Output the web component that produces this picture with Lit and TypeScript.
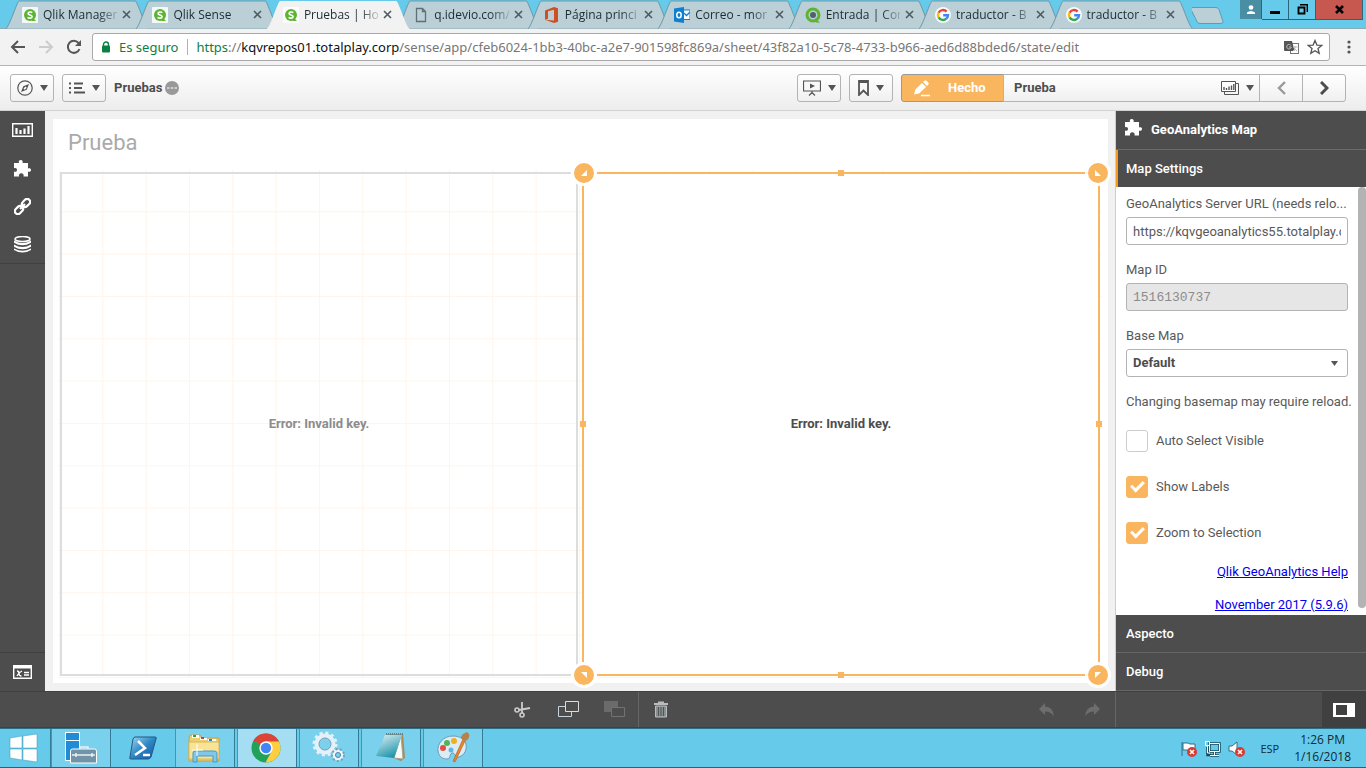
import { LitElement, html, svg, css } from "lit";
import { customElement } from "lit/decorators.js";
import { classMap } from "lit/directives/class-map.js";

const qlik = svg`
  <rect x="0" y="0" width="16" height="16" rx="1" fill="#fff" opacity=".85"/>
  <circle cx="8" cy="8" r="6" fill="#5cb531"/><path d="M9 9l5 5h-4z" fill="#5cb531"/>
  <path d="M10.3 5.6C9 4.6 6 4.8 6.1 6.6c.1 1.700 4 1.200 4 3-.1 1.900-3.100 1.900-4.500.7" fill="none" stroke="#fff" stroke-width="1.600"/>`;
const google = svg`
  <circle cx="8" cy="8" r="8" fill="#fff" opacity=".9"/>
  <g fill="none" stroke-width="2.400">
    <path d="M11.600 4.600A5 5 0 0 0 3.600 5.700" stroke="#ea4335"/>
    <path d="M3.600 5.700a5 5 0 0 0 0 4.800" stroke="#fbbc05"/>
    <path d="M3.600 10.400a5 5 0 0 0 7.700 1.300" stroke="#34a853"/>
    <path d="M11.300 11.700A5 5 0 0 0 13 8.200H8.200" stroke="#4285f4"/>
  </g>`;
const glyphs: Record<string, unknown> = {
  qlik,
  google,
  page: svg`<path d="M3.500 1.500h6l3 3v10h-9zM9.500 1.500v3h3" fill="none" stroke="#5f7177" stroke-width="1.300"/>`,
  office: svg`<path d="M1 3.500L10 0l4 1.200v13.600L10 16l-9-3.200 9 .8V2.800L4 4.200v7.600l-3 1z" fill="#cf4f25"/>`,
  outlook: svg`<path d="M9 3h7v9.500H9z" fill="#fff" stroke="#0f7fd0"/><path d="M10 6l2.500 2.500L16 5" fill="none" stroke="#0f7fd0" stroke-width="1.300"/>
    <path d="M0 1.500L10 0v16L0 14.500z" fill="#0f7fd0"/><ellipse cx="5" cy="8" rx="2.200" ry="2.800" fill="none" stroke="#fff" stroke-width="1.500"/>`,
  ring: svg`<circle cx="8" cy="8" r="6" fill="#bcd" stroke="#5cb531" stroke-width="3"/><path d="M10 11l5 4.500h-4z" fill="#5cb531"/><circle cx="8" cy="8" r="3" fill="#50616a"/>`,
};

const tabs = [
  { icon: "qlik", title: "Qlik Manager" },
  { icon: "qlik", title: "Qlik Sense" },
  { icon: "qlik", title: "Pruebas | Hoj", active: true },
  { icon: "page", title: "q.idevio.com/" },
  { icon: "office", title: "Página princi" },
  { icon: "outlook", title: "Correo - mor" },
  { icon: "ring", title: "Entrada | Cor" },
  { icon: "google", title: "traductor - B" },
  { icon: "google", title: "traductor - B" },
];

@customElement("browser-chrome")
export class BrowserChrome extends LitElement {
  static styles = css`
    :host { display: block; font-family: "Noto Sans", "Open Sans", sans-serif; color: #222; }
    .strip { display: flex; height: 29px; background: #66caea; box-sizing: border-box; }
    .tabs { flex: 1; min-width: 0; display: flex; padding-left: 18px; border-bottom: 1px solid #8eabb5; height: 28px; }
    .tab { position: relative; flex: 1 1 0; min-width: 0; display: flex; align-items: center; gap: 5px; height: 29px; margin-left: -12px; padding: 0 17px 0 16px; box-sizing: border-box; border: 0; background: none; font: 12px/16px "Open Sans", sans-serif; text-align: left; color: #1d2c33; }
    .tab svg { position: relative; flex: none; }
    .tab .shape { position: absolute; left: 0; top: 0; width: 100%; height: 29px; overflow: visible; }
    .tab.active { z-index: 1; }
    .title { position: relative; flex: 1; min-width: 0; white-space: nowrap; -webkit-mask-image: linear-gradient(90deg, #000 75%, rgba(0, 0, 0, 0.2)); }
    .side { width: 174px; display: flex; justify-content: space-between; align-items: flex-start; border-bottom: 1px solid #8eabb5; height: 28px; }
    .win { display: flex; margin-right: 3px; }
    .win button { border: 1px solid #2c6479; border-top: 0; border-left: 0; height: 20px; padding: 0; background: #66caea; display: flex; align-items: center; justify-content: center; width: 27px; }
    .win .user { background: #4a8ea4; width: 22px; height: 19px; border-bottom: 0; }
    .win .close { background: #c75850; width: 47px; }
    .nav { display: flex; align-items: center; height: 37px; box-sizing: border-box; background: #f2f2f2; border-bottom: 1px solid #b4b4b4; padding: 0 8px 0 8px; gap: 8px; }
    .nav .ic { border: 0; background: none; padding: 0; width: 20px; height: 20px; flex: none; }
    .box { flex: 1; min-width: 0; display: flex; align-items: center; height: 28px; box-sizing: border-box; border: 1px solid #a9a9a9; border-radius: 3px; background: #fff; padding: 0 6px 0 8px; gap: 8px; }
    .safe { color: #0b8043; font-size: 13px; border-right: 1px solid #b0b0b0; padding-right: 9px; line-height: 16px; white-space: nowrap; }
    .url { flex: 1; color: #777; font-size: 13px; line-height: 18px; white-space: nowrap; overflow: hidden; }
    .url b { font-weight: 400; color: #0b8043; }
    .url i { font-style: normal; color: #111; }
  `;

  render() {
    return html`
      <div class="strip">
        <div class="tabs">
          ${tabs.map(
            (t) => html`<button class=${classMap({ tab: true, active: !!t.active })}>
              <svg class="shape" viewBox="0 0 142 29" preserveAspectRatio="none">
                <path d="M0 28.500C3 28 11 1 13 1H129C131 1 139 28 142 28.500${t.active ? "V29H0Z" : ""}" fill=${t.active ? "#f2f2f2" : "#bacfd6"} stroke=${t.active ? "none" : "#6f99a8"}/>
              </svg>
              <svg width="16" height="16" viewBox="0 0 16 16">${glyphs[t.icon]}</svg>
              <span class="title">${t.title}</span>
              <svg width="9" height="9" viewBox="0 0 9 9"><path d="M1 1l7 7M8 1L1 8" stroke="#4f5b60" stroke-width="1.600"/></svg>
            </button>`
          )}
        </div>
        <div class="side">
          <svg width="36" height="26"><path d="M2 7.500h24q2 0 3 2l4 12q0 2-2 2H10q-2 0-3-2L1 9.500q0-2 1-2z" fill="#bacfd6" stroke="#5c9db2" transform="translate(-2 0)"/></svg>
          <div class="win">
            <button class="user" aria-label="Usuario"><svg width="10" height="10"><circle cx="5" cy="2.500" r="2.300" fill="#fff"/><path d="M1 9V7.500Q5 4.500 9 7.500V9z" fill="#fff"/></svg></button>
            <button aria-label="Minimizar"><svg width="10" height="10"><rect y="6" width="10" height="3"/></svg></button>
            <button aria-label="Restaurar"><svg width="11" height="11"><path d="M3 .5h7.500V8M1.500 3.500h6v6h-6z" fill="none" stroke="#000" stroke-width="1.800"/></svg></button>
            <button class="close" aria-label="Cerrar"><svg width="9" height="9"><path d="M1 1l7 7M8 1L1 8" stroke="#000" stroke-width="2.600"/></svg></button>
          </div>
        </div>
      </div>
      <div class="nav">
        <button class="ic" aria-label="Atrás"><svg width="20" height="20"><path d="M17 10H4M10 4l-6 6 6 6" fill="none" stroke="#555" stroke-width="2"/></svg></button>
        <button class="ic" aria-label="Adelante"><svg width="20" height="20"><path d="M3 10h13M10 4l6 6-6 6" fill="none" stroke="#ccc" stroke-width="2"/></svg></button>
        <button class="ic" aria-label="Recargar"><svg width="20" height="20"><path d="M15.500 12A6 6 0 1 1 14.500 6" fill="none" stroke="#555" stroke-width="2"/><path d="M17 3v6h-6z" fill="#555"/></svg></button>
        <div class="box">
          <svg width="10" height="12"><path d="M2.500 5V3.500a2.500 2.500 0 0 1 5 0V5" fill="none" stroke="#0b8043" stroke-width="1.400"/><rect x="1" y="4.500" width="8" height="7" rx="1" fill="#0b8043"/></svg>
          <span class="safe">Es seguro</span>
          <span class="url"><b>https</b>://<i>kqvrepos01.totalplay.corp</i>/sense/app/cfeb6024-1bb3-40bc-a2e7-901598fc869a/sheet/43f82a10-5c78-4733-b966-aed6d88bded6/state/edit</span>
          <svg width="15" height="15"><rect x="6.500" y="3.500" width="8" height="10" fill="#fff" stroke="#777"/><path d="M0 1h8l2.500 10H1q-1 0-1-1z" fill="#555"/><path d="M7 5.500A2.300 2.300 0 1 0 7.300 7H5M9 7h4.500M11 6v1q0 3-2 4M10 8l3 3" fill="none" stroke="#bbb" stroke-width="1"/></svg>
          <svg width="16" height="16"><path d="M8 1.500l1.900 4.600 4.800.3-3.700 3.100 1.200 4.800L8 11.700l-4.200 2.600L5 9.500 1.300 6.400l4.800-.3z" fill="none" stroke="#555" stroke-width="1.300"/></svg>
        </div>
        <button class="ic" aria-label="Menú"><svg width="20" height="20"><circle cx="11" cy="5" r="1.600" fill="#555"/><circle cx="11" cy="10" r="1.600" fill="#555"/><circle cx="11" cy="15" r="1.600" fill="#555"/></svg></button>
      </div>`;
  }
}

const caret = html`<svg width="8" height="6"><path d="M0 0h8L4 6z" fill="#555"/></svg>`;
const puzzle = (s: number) => html`<svg width=${s} height=${s} viewBox="0 0 17 17"><path d="M0 3h5C4.300 1.500 5 0 6.700 0s2.500 1.500 1.800 3H14v5.500c1.500-.8 3-.2 3 1.500s-1.500 2.300-3 1.500V16.500H9.500c.7-2-.5-3.300-2.200-3.300s-2.900 1.300-2.200 3.300H0v-5c2 .6 3-.3 3-1.600S2 7.600 0 8.200z" fill="#fff"/></svg>`;

@customElement("sense-toolbar")
export class SenseToolbar extends LitElement {
  static styles = css`
    :host { display: flex; align-items: center; height: 45px; box-sizing: border-box; border-bottom: 1px solid #d2d2d2; background: linear-gradient(#fff, #ededed); padding: 0 20px 0 10px; gap: 8px; font: bold 13px/16px Roboto, "Open Sans", sans-serif; color: #4d4d4d; }
    button { font: inherit; color: inherit; height: 28px; box-sizing: border-box; border: 1px solid #b3b3b3; border-radius: 3px; background: linear-gradient(#fff, #f0f0f0); display: flex; align-items: center; justify-content: center; gap: 7px; width: 44px; padding: 0; }
    .name { display: flex; gap: 3px; flex: 1; align-items: center; }
    .group { display: flex; }
    .group button { border-radius: 0; margin-right: -1px; }
    .group .done { width: 103px; background: #fab65f; border-color: #999; color: #fff; border-radius: 3px 0 0 3px; justify-content: flex-start; padding-left: 11px; gap: 17px; }
    .group .sheet { width: 257px; justify-content: flex-start; padding: 0 5px 0 10px; }
    .sheet span { flex: 1; text-align: left; }
    .group .last { border-radius: 0 3px 3px 0; margin-right: 0; }
  `;

  render() {
    return html`
      <button aria-label="Navegación"><svg width="16" height="16"><circle cx="8" cy="8" r="7.200" fill="none" stroke="#555" stroke-width="1.200"/><path d="M12 4l-2.300 5.700L4 12l2.300-5.700z" fill="#555"/><path d="M6.500 8.500l2-2 1.200 1.200-2 2z" fill="#fff"/></svg>${caret}</button>
      <button aria-label="Menú"><svg width="16" height="12"><path d="M5 1.500h9M5 6h8M5 10.500h11" stroke="#555" stroke-width="2"/><path d="M0 1.500h2M0 6h2M0 10.500h2" stroke="#555" stroke-width="2"/></svg>${caret}</button>
      <div class="name"><span>Pruebas</span><svg width="14" height="14"><circle cx="7" cy="7" r="7" fill="#999"/><path d="M2 7h2.500M5.700 7h2.600M9.500 7H12" stroke="#fff" stroke-width="1.200"/></svg></div>
      <button aria-label="Historias"><svg width="18" height="16"><path d="M.5 1h17v10H.5zM9 11v3M6 15.500l3-3 3 3" fill="none" stroke="#555" stroke-width="1.200"/><path d="M7 3.500l5 2.500-5 2.500z" fill="#555"/></svg>${caret}</button>
      <button aria-label="Marcadores"><svg width="11" height="16"><path d="M1 1h9v14L5.500 10.500 1 15z" fill="none" stroke="#555" stroke-width="1.800"/><path d="M1 1h9v2H1z" fill="#555"/></svg>${caret}</button>
      <div class="group">
        <button class="done"><svg width="18" height="17"><path d="M1 14.500l1.300-5L9 3l4 4-7 6.500zM10 2l2-1.800q2-.5 4 3.500L14 6z" fill="#fff"/><path d="M8 15.500h9" stroke="#fff" stroke-width="1.500"/></svg>Hecho</button>
        <button class="sheet"><span>Prueba</span><svg width="18" height="14"><path d="M15 2.500h2.500v11h-14V11" fill="none" stroke="#555"/><path d="M.5.500h14v10H.500z" fill="#fff" stroke="#555"/><path d="M3 9V6M5.500 9V7M8 9V5.500M10.500 9V4.500M12.800 9V3" stroke="#555" stroke-width="1.400"/></svg>${caret}</button>
        <button aria-label="Anterior"><svg width="9" height="14"><path d="M8 1L2 7l6 6" fill="none" stroke="#999" stroke-width="2.400"/></svg></button>
        <button class="last" aria-label="Siguiente"><svg width="9" height="14"><path d="M1 1l6 6-6 6" fill="none" stroke="#4d4d4d" stroke-width="3"/></svg></button>
      </div>`;
  }
}

@customElement("sense-sheet")
export class SenseSheet extends LitElement {
  static styles = css`
    :host { flex: 1; min-width: 0; display: flex; background: #f1f1f1; padding: 8px 7px 8px 8px; font-family: Roboto, "Open Sans", sans-serif; }
    .sheet { flex: 1; min-width: 0; background: #fff; display: flex; flex-direction: column; padding: 0 6px 5px 5px; }
    h1 { margin: 0; height: 51px; padding-left: 10px; font-weight: 400; font-size: 22px; line-height: 48px; color: #aaa; }
    .grid { flex: 1; min-height: 0; display: flex; gap: 4px; padding: 2px;
      background-image: linear-gradient(90deg, transparent calc(100% - 1px), #fff5ea 0), linear-gradient(transparent calc(100% - 1px), #fff5ea 0);
      background-origin: content-box, padding-box;
      background-size: calc(100% / 24) calc(100% / 12); }
    .obj { position: relative; flex: 1; display: flex; align-items: center; justify-content: center; font-size: 13px; font-weight: 700; line-height: 16px; border: 2px solid #ddd; color: #8c8c8c; }
    .obj.sel { border-color: #fab65f; background: #fff; color: #4d4d4d; }
    .h { position: absolute; width: 20px; height: 20px; border-radius: 50%; background: #fab65f; border: 3px solid #fff; }
    .h svg { display: block; margin: 7px; }
    .tl { left: -13px; top: -14px; } .tr { right: -13px; top: -14px; }
    .bl { left: -13px; bottom: -14px; } .br { right: -13px; bottom: -14px; }
    .tr svg { transform: scaleX(-1); } .bl svg { transform: scaleY(-1); } .br svg { transform: scale(-1, -1); }
    .q { position: absolute; width: 6px; height: 6px; background: #fab65f; }
    .n { top: -4px; left: calc(50% - 3px); } .s { bottom: -4px; left: calc(50% - 3px); }
    .w { left: -4px; top: calc(50% - 3px); } .e { right: -4px; top: calc(50% - 3px); }
  `;

  render() {
    const mark = html`<svg width="6" height="6"><path d="M6 0v6H0z" fill="#fff"/></svg>`;
    return html`<div class="sheet">
      <h1>Prueba</h1>
      <div class="grid">
        <div class="obj">Error: Invalid key.</div>
        <div class="obj sel">Error: Invalid key.
          ${["tl", "tr", "bl", "br"].map((c) => html`<span class="h ${c}">${mark}</span>`)}
          ${["n", "s", "w", "e"].map((c) => html`<span class="q ${c}"></span>`)}
        </div>
      </div>
    </div>`;
  }
}

@customElement("sense-panel")
export class SensePanel extends LitElement {
  static styles = css`
    :host { width: 250px; flex: none; display: flex; flex-direction: column; border-left: 1px solid #ccc; background: #fff; font: 13px/16px Roboto, "Open Sans", sans-serif; color: #595959; }
    .head { height: 38px; background: #4d4d4d; color: #fff; font-weight: 700; display: flex; align-items: center; gap: 9px; padding-left: 9px; border-bottom: 1px solid #6b6b6b; }
    .head svg { margin-bottom: 6px; }
    .sec { height: 38px; box-sizing: border-box; background: #4d4d4d; color: #fff; border: 0; border-bottom: 1px solid #666; text-align: left; padding: 0 10px; font: 500 13px/16px Roboto, sans-serif; flex: none; }
    .sec.open { height: 37px; border-bottom: 0; border-left: 2px solid #f8981d; padding-left: 8px; }
    .body { flex: 1; min-height: 0; display: flex; overflow: hidden; }
    .form { flex: 1; min-width: 0; display: flex; flex-direction: column; padding: 9px 10px 0; }
    .bar { width: 8px; height: calc(100% - 7px); background: #b3b3b3; border-radius: 4px; }
    label, .note { white-space: nowrap; }
    .lab { margin-bottom: 5px; }
    .in { flex: none; height: 28px; box-sizing: border-box; width: 100%; border: 1px solid #b3b3b3; border-radius: 3px; background: #fff; padding: 0 6px; font: inherit; color: #595959; margin: 0 0 17px; }
    .in:disabled { background: #e6e6e6; color: #8c8c8c; font-family: "Liberation Mono", monospace; opacity: 1; }
    .pick { display: grid; align-items: center; }
    .pick select, .pick svg { grid-area: 1 / 1; }
    .pick select { appearance: none; font-weight: 700; color: #4d4d4d; }
    .pick svg { justify-self: end; margin: 0 10px 17px 0; pointer-events: none; }
    .checks { display: flex; flex-direction: column; gap: 24px; margin-bottom: 20px; }
    .check { display: flex; align-items: center; gap: 8px; height: 22px; }
    .check input { appearance: none; margin: 0; width: 22px; height: 22px; border: 1px solid #ccc; border-radius: 3px; background: #fff; display: grid; place-items: center; }
    .check input:checked { background: #fab65f; border-color: #fab65f; }
    .check input:checked::after { content: ""; width: 10px; height: 5px; border: solid #fff; border-width: 0 0 3px 3px; transform: rotate(-45deg); margin-bottom: 4px; }
    .note { margin: 0 0 20px; }
    a { color: #00e; align-self: flex-end; margin-bottom: 17px; white-space: nowrap; }
    a:last-child { margin-bottom: 0; }
  `;

  render() {
    return html`
      <div class="head">${puzzle(17)}<span>GeoAnalytics Map</span></div>
      <button class="sec open">Map Settings</button>
      <div class="body">
        <div class="form">
          <label class="lab" for="url">GeoAnalytics Server URL (needs relo...</label>
          <input class="in" id="url" value="https://kqvgeoanalytics55.totalplay.corp"/>
          <label class="lab" for="mapid">Map ID</label>
          <input class="in" id="mapid" value="1516130737" disabled/>
          <label class="lab" for="base">Base Map</label>
          <div class="pick"><select class="in" id="base"><option>Default</option></select><svg width="7" height="5"><path d="M0 0h7L3.500 5z" fill="#555"/></svg></div>
          <p class="note">Changing basemap may require reload.</p>
          <div class="checks">
            <label class="check"><input type="checkbox"/>Auto Select Visible</label>
            <label class="check"><input type="checkbox" checked/>Show Labels</label>
            <label class="check"><input type="checkbox" checked/>Zoom to Selection</label>
          </div>
          <a href="#help">Qlik GeoAnalytics Help</a>
          <a href="#version">November 2017 (5.9.6)</a>
        </div>
        <div class="bar"></div>
      </div>
      <button class="sec">Aspecto</button>
      <button class="sec">Debug</button>`;
  }
}

const apps = [
  { name: "Inicio", kind: "start", art: svg`<path d="M2 7l12-2v12H2zM15 5l14-2v14H15zM2 18h12v11L2 27zM15 18h14v13l-14-2z" fill="#fff" stroke="#3e94b3" stroke-width=".5"/>` },
  { name: "Administrador del servidor", kind: "open", art: svg`<path d="M1.500 1.500h14v28h-14z" fill="#1f8cd8" stroke="#fff"/><path d="M1.500 9.500h14" stroke="#fff"/><path d="M6.500 20q0-2 2-2h22q2 0 2 2v12h-26z" fill="#7393a7" stroke="#fff"/><path d="M16 18v-2h8v2M8 24h23M12 22v4M28 22v4" fill="none" stroke="#e8f2f8" stroke-width="1.500"/>` },
  { name: "PowerShell", kind: "pin", art: svg`<defs><linearGradient id="ps" x2="1" y2="1"><stop stop-color="#a2daf0"/><stop offset=".5" stop-color="#2d86c4"/><stop offset="1" stop-color="#1454a4"/></linearGradient></defs><path d="M9 6h20q2 0 1 2l-5 18q-1 2-3 2H5q-2 0-1-2L7 8q1-2 2-2z" fill="url(#ps)" stroke="#25587f"/><path d="M12 10l7 7-10 7" fill="none" stroke="#fff" stroke-width="2.500"/><path d="M17 24h7" stroke="#fff" stroke-width="2.500"/>` },
  { name: "Explorador", kind: "open", art: svg`<path d="M1 7l1-3h10l2 3h17v23H1z" fill="#edcf70" stroke="#c4a050"/><path d="M4 4h7v3H4zM12 7h7v2h-7zM20 8h8v2h-8z" fill="#fff"/><path d="M5 4h3v2H5z" fill="#1aad32"/><path d="M13 6h3v2h-3z" fill="#cd422b"/><path d="M21 8h3v2h-3z" fill="#1688d8"/><path d="M1 11h30v17H1z" fill="#f9e394" stroke="#d7b761"/><path d="M5 31v-9q0-2 2-2h19q3 0 3 2v9h-4v-6H9v6z" fill="#7fc8ec" stroke="#4699c4"/><path d="M9 13v12M4 19h11" stroke="#fff"/>` },
  { name: "Chrome", kind: "active", art: svg`<circle cx="16" cy="17" r="14.500" fill="#21a15a"/><path d="M16 17L3.500 9.500A14.500 14.500 0 0 1 29 10.500H16z" fill="#db4437"/><path d="M29 10.500A14.500 14.500 0 0 1 15.500 31.500L22 19.500 16 10.500z" fill="#ffcd40"/><circle cx="16" cy="17" r="6.700" fill="#fff"/><circle cx="16" cy="17" r="5.200" fill="#4285f4"/>` },
  { name: "Servicios", kind: "open", art: svg`<circle cx="13" cy="13" r="8" fill="none" stroke="#e5f1f8" stroke-width="5"/><circle cx="13" cy="13" r="11" fill="none" stroke="#e5f1f8" stroke-width="3" stroke-dasharray="3 2.760"/><circle cx="13" cy="13" r="6" fill="none" stroke="#6695b8"/><circle cx="26" cy="24" r="4" fill="none" stroke="#eff6fb" stroke-width="3"/><circle cx="26" cy="24" r="6" fill="none" stroke="#779eb9" stroke-width="2" stroke-dasharray="2 2.190"/><circle cx="26" cy="24" r="2.500" fill="#7ad1ee" stroke="#5485a8"/>` },
  { name: "Bloc de notas", kind: "open", art: svg`<defs><linearGradient id="np" x2=".5" y2="1"><stop stop-color="#e2f2f5"/><stop offset="1" stop-color="#2196ab"/></linearGradient></defs><path d="M12 3h17l2 24-4 3-8-3z" fill="#a88b52"/><path d="M27 4l2 24-9-1z" fill="#f8f8f4" stroke="#a9a69a"/><path d="M11 4h17l-8 23-18-2z" fill="url(#np)"/><path d="M12 3h17" stroke="#70817f" stroke-width="2" stroke-dasharray="1 1"/>` },
  { name: "Paint", kind: "open", art: svg`<path d="M17 5C7 5 1 13 2 20s6 8 9 8c4 0 2-5 5-6s3 5 7 4c6-2 8-8 7-13S23 5 17 5z" fill="#dbecf5" stroke="#6a9bb7"/><circle cx="7" cy="17" r="3" fill="#e05040"/><circle cx="11" cy="12" r="3" fill="#52b454"/><circle cx="18" cy="10" r="3" fill="#f0ae25"/><circle cx="15" cy="19" r="2.500" fill="#60b6df"/><path d="M27 8l2 2-10 21-2-1z" fill="#e88729" stroke="#a95d23" stroke-width=".6"/><path d="M25 7q0-4 6-6 3 2 2 5-1 4-5 4z" fill="#b6824b"/>` },
];

@customElement("sense-footer")
export class SenseFooter extends LitElement {
  static styles = css`
    :host { display: flex; height: 37px; flex: none; box-sizing: border-box; background: #4d4d4d; border-top: 1px solid #404040; border-bottom: 1px solid #404040; }
    button { border: 0; background: none; padding: 0; width: 46px; display: flex; align-items: center; justify-content: center; }
    .tools { flex: 1; display: flex; justify-content: center; padding-left: 160px; }
    .del { border-left: 1px solid #666; }
    .right { width: 250px; display: flex; justify-content: flex-end; border-left: 1px solid #666; }
    .right button { width: 44px; background: #404040; }
  `;

  render() {
    return html`
      <div class="tools">
        <button aria-label="Cortar"><svg width="17" height="17"><g fill="none" stroke="#ccc"><circle cx="3" cy="9" r="2" stroke-width="1.600"/><circle cx="8" cy="14" r="2" stroke-width="1.600"/><path d="M5 9l11-2M8 12V1" stroke-width="1.800"/></g></svg></button>
        <button aria-label="Copiar"><svg width="21" height="17"><path d="M.5 5.500h13v10H.500z" fill="none" stroke="#c8d5dd"/><path d="M7.500.500h13v10h-13z" fill="#4d4d4d" stroke="#ddd"/></svg></button>
        <button aria-label="Pegar"><svg width="21" height="17"><path d="M0 0h14v11H0z" fill="#6b6b6b"/><path d="M7.500 6.500h13v9h-13z" fill="#4d4d4d" stroke="#737373"/></svg></button>
        <button class="del" aria-label="Eliminar"><svg width="14" height="17"><path d="M0 3h14M4 1.500h6" stroke="#bbb" stroke-width="2"/><path d="M1.500 5h11v11h-11z" fill="#87908f" stroke="#bbb"/><path d="M4.500 6v9M7 6v9M9.500 6v9" stroke="#535353"/></svg></button>
      </div>
      <button aria-label="Deshacer"><svg width="15" height="14"><path d="M6 0v3.500q8 0 9 10-3-5-9-5V12L0 6z" fill="#6d6d6d"/></svg></button>
      <button aria-label="Rehacer"><svg width="15" height="14"><path d="M9 0v3.500q-8 0-9 10 3-5 9-5V12l6-6z" fill="#6d6d6d"/></svg></button>
      <div class="right"><button aria-label="Propiedades"><svg width="22" height="14"><path d="M0 0h22v14H0z" fill="#fff"/><path d="M3 2h11v10H3z" fill="#404040"/></svg></button></div>`;
  }
}

@customElement("task-bar")
export class TaskBar extends LitElement {
  static styles = css`
    :host { display: flex; height: 40px; flex: none; box-sizing: border-box; background: #66caea; border-top: 1px solid #2d6e87; border-bottom: 1px solid #3b5d6a; font: 12px/17px "Open Sans", "Noto Sans", sans-serif; color: #102a35; padding-right: 15px; }
    button { width: 60px; margin-right: 2px; padding: 0; border: 0; border-right: 1px solid #357c96; border-left: 1px solid #4695b1; background: #7ad1ee; display: flex; align-items: center; justify-content: center; }
    .start { width: 51px; margin: 0; background: none; border-left: 0; }
    .pin { background: none; border: 0; }
    .active { background: #a5def3; }
    .gap { flex: 1; }
    .tray { display: flex; align-items: center; gap: 7px; }
    .lang { margin: 0 8px 0 8px; font-size: 11px; }
    .time { text-align: center; }
  `;

  render() {
    const bad = svg`<circle cx="12" cy="12" r="5" fill="#d93b32"/><path d="M10 10l4 4M14 10l-4 4" stroke="#fff" stroke-width="1.500"/>`;
    return html`
      ${apps.map((a) => html`<button class=${a.kind} aria-label=${a.name}><svg width="34" height="34" viewBox="0 0 34 34">${a.art}</svg></button>`)}
      <div class="gap"></div>
      <div class="tray">
        <svg width="17" height="17"><path d="M2 2v14M3 3h5l2 1h5v7H9L8 10H3z" fill="#fff" stroke="#356d81"/>${bad}</svg>
        <svg width="17" height="17"><path d="M5.500 3.500h10v8h-10zM10.500 12v3M6 15.500h9M3.500 7v8H7" fill="none" stroke="#1a4a5c" stroke-width="2.500"/><path d="M5.500 3.500h10v8h-10zM10.500 12v3M6 15.500h9M1.500 1.500h4v4h-4zM3.500 6v7H6" fill="none" stroke="#fff"/></svg>
        <svg width="17" height="17"><path d="M1 6h3l5-4v13l-5-4H1z" fill="#fff" stroke="#356d81"/>${bad}</svg>
        <span class="lang">ESP</span>
        <div class="time">1:26 PM<br/>1/16/2018</div>
      </div>`;
  }
}

@customElement("app-root")
export class AppRoot extends LitElement {
  static styles = css`
    :host { display: flex; flex-direction: column; height: 100vh; overflow: hidden; }
    .main { flex: 1; min-height: 0; display: flex; }
    .rail { width: 45px; flex: none; background: #4d4d4d; display: flex; flex-direction: column; }
    .rail button { height: 38px; border: 0; padding: 0; background: none; display: flex; align-items: center; justify-content: center; }
    .top { display: flex; flex-direction: column; border-bottom: 1px solid #404040; flex: none; }
    .bottom { margin-top: auto; border-top: 1px solid #404040; display: flex; flex-direction: column; }
  `;

  render() {
    return html`
      <browser-chrome></browser-chrome>
      <sense-toolbar></sense-toolbar>
      <div class="main">
        <nav class="rail">
          <div class="top">
            <button aria-label="Gráficos"><svg width="21" height="14"><path d="M.7.700h19.600v12.600H.700z" fill="none" stroke="#fff" stroke-width="1.400"/><path d="M4.500 11V5M8.500 11V7M12.500 11V5.500M16.500 11V3" stroke="#fff" stroke-width="2.200"/></svg></button>
            <button aria-label="Objetos personalizados">${puzzle(17)}</button>
            <button aria-label="Elementos maestros"><svg width="17" height="17" viewBox="0 0 17 17"><g fill="none" stroke="#fff" stroke-width="2.200" transform="rotate(-45 8.500 8.500)"><rect x="-1" y="5.500" width="9" height="6" rx="3"/><rect x="9" y="5.500" width="9" height="6" rx="3"/><path d="M5 8.500h7"/></g></svg></button>
            <button aria-label="Campos"><svg width="17" height="17"><ellipse cx="8.500" cy="3" rx="7.500" ry="2.500" fill="none" stroke="#fff" stroke-width="1.500"/><path d="M0 4.500q8.500 5 17 0v2.200q-8.500 5-17 0zM0 8.500q8.500 5 17 0v2.200q-8.500 5-17 0zM0 12.500q8.500 4.500 17 0V14q-8.500 5-17 0z" fill="#fff"/></svg></button>
          </div>
          <div class="bottom">
            <button aria-label="Variables"><svg width="19" height="14"><path d="M.7.700h17.600v12.600H.700z" fill="none" stroke="#fff" stroke-width="1.400"/><path d="M0 0h19v3.500H0z" fill="#fff"/><path d="M4 6q2 0 2 2.500T8.500 11M9 6q-3 1-5 5M11 7.500h5M11 10h5" fill="none" stroke="#fff" stroke-width="1.300"/></svg></button>
          </div>
        </nav>
        <sense-sheet></sense-sheet>
        <sense-panel></sense-panel>
      </div>
      <sense-footer></sense-footer>
      <task-bar></task-bar>`;
  }
}
